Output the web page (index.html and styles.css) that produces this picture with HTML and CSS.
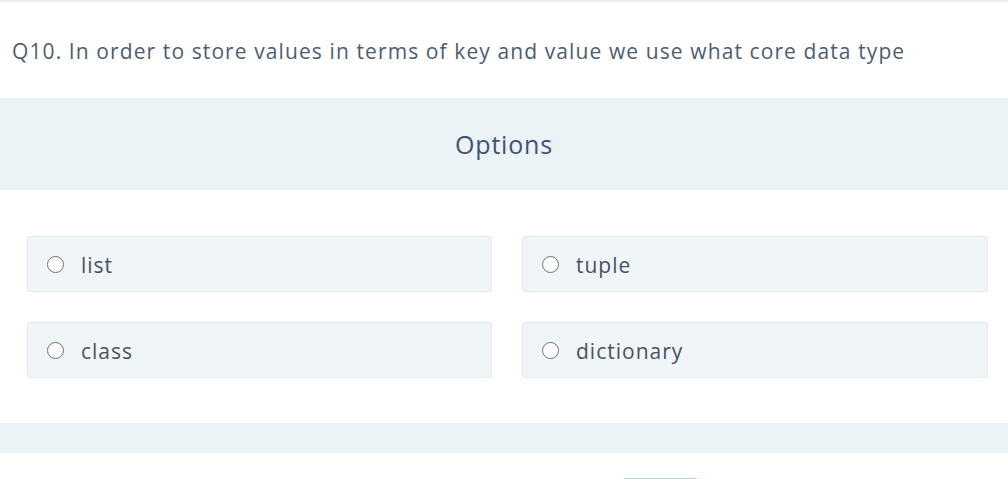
FILE: index.html
```html
<!DOCTYPE html>
<html>
<head>
  <title>Quiz question</title>
  <link rel="stylesheet" href="styles.css">
</head>
<body>
  <section class="quiz-wrap">
    <div class="question">
      <p class="question-text">Q10. In order to store values in terms of key and value we use what core data type</p>
    </div>

    <div class="options-head">
      <h2 class="options-title">Options</h2>
    </div>

    <div class="options-grid">
      <label class="option-box">
        <span class="radio"></span>
        <span class="option-text">list</span>
      </label>
      <label class="option-box">
        <span class="radio"></span>
        <span class="option-text">tuple</span>
      </label>
      <label class="option-box">
        <span class="radio"></span>
        <span class="option-text">class</span>
      </label>
      <label class="option-box">
        <span class="radio"></span>
        <span class="option-text">dictionary</span>
      </label>
    </div>

    <div class="options-foot"></div>

    <div class="submit-row">
      <div class="btn-submit"></div>
    </div>
  </section>
</body>
</html>
```

FILE: styles.css
```css
* {
  margin: 0;
  padding: 0;
  box-sizing: border-box;
  font-family: "Open Sans", Lato, sans-serif;
}

body {
  background-color: #fff;
  overflow: hidden;
}

.quiz-wrap {
  border-top: 2px solid #e9eef2;
}

.question {
  height: 96px;
  display: flex;
  align-items: center;
  padding: 2px 12px 0;
}

.question-text {
  font-size: 21px;
  letter-spacing: 1.1px;
  color: #4d5d70;
}

.options-head {
  height: 92px;
  background-color: #ecf3f7;
  display: flex;
  align-items: center;
  justify-content: center;
}

.options-title {
  font-size: 25px;
  letter-spacing: 0.8px;
  font-weight: 400;
  color: #3d5570;
}

.options-grid {
  display: grid;
  grid-template-columns: 465px 466px;
  column-gap: 30px;
  row-gap: 30px;
  padding: 46px 0 45px 27px;
}

.option-box {
  height: 56px;
  display: flex;
  align-items: center;
  gap: 17px;
  padding-left: 19px;
  background-color: #f0f5f7;
  border: 1px solid #e3e9ed;
  border-radius: 3px;
}

.radio {
  width: 17px;
  height: 17px;
  border: 1.5px solid #6f6f6f;
  border-radius: 50%;
  background-color: #fff;
}

.option-text {
  font-size: 21px;
  letter-spacing: 1px;
  color: #4b5063;
  padding-top: 2px;
}

.options-foot {
  height: 30px;
  background-color: #ecf3f7;
}

.submit-row {
  display: flex;
  justify-content: center;
  padding-top: 25px;
  padding-left: 312px;
}

.btn-submit {
  width: 77px;
  height: 40px;
  border-radius: 4px;
  background-color: #a8e6b0;
}
```
